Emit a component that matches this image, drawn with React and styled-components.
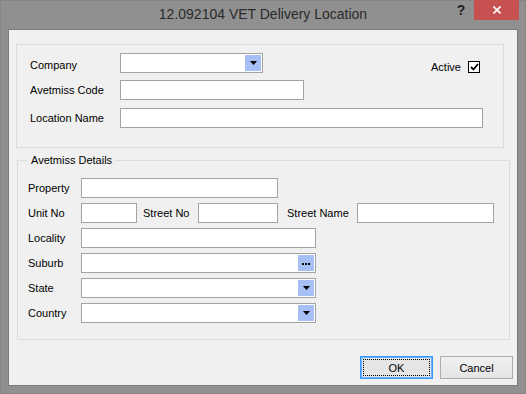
import React from 'react';
import styled, { createGlobalStyle } from 'styled-components';

const GlobalStyle = createGlobalStyle`
  html, body {
    margin: 0;
    padding: 0;
  }
  body {
    font-family: "Liberation Sans", Arial, sans-serif;
    background: #fff;
  }
`;

const Window = styled.div`
  width: 526px;
  height: 394px;
  box-sizing: border-box;
  background: #909090;
  box-shadow: inset 0 0 0 1px #858585;
  display: flex;
  flex-direction: column;
`;

const TitleBar = styled.div`
  height: 29px;
  flex-shrink: 0;
  display: grid;
  grid-template-columns: 1fr auto 1fr;
  align-items: start;
`;

const Title = styled.div`
  grid-column: 2;
  line-height: 29px;
  font-size: 14px;
  color: #2b2b2b;
  white-space: nowrap;
`;

const Controls = styled.div`
  grid-column: 3;
  justify-self: end;
  display: flex;
  margin-right: 7px;
`;

const HelpButton = styled.div`
  width: 26px;
  height: 20px;
  display: flex;
  align-items: center;
  justify-content: center;
  font-size: 14px;
  font-weight: bold;
  color: #222;
`;

const CloseButton = styled.div`
  width: 45px;
  height: 20px;
  background: #c75050;
  display: flex;
  align-items: center;
  justify-content: center;
`;

const Client = styled.div`
  flex: 1;
  margin: 0 8px 8px;
  background: #f0f0f0;
  border: 1px solid #7c7c7c;
  display: flex;
  flex-direction: column;
`;

const TopGroup = styled.div`
  margin: 14px 0 0 7px;
  width: 488px;
  height: 104px;
  box-sizing: border-box;
  border: 1px solid #dcdcdc;
  padding: 8px 23px 0 13px;
  display: flex;
  flex-direction: column;
  gap: 7px;
`;

const DetailsGroup = styled.fieldset`
  margin: 5px 0 0 8px;
  width: 493px;
  box-sizing: border-box;
  min-width: 0;
  border: 1px solid #dcdcdc;
  padding: 11px 0 16px 0;
`;

const Legend = styled.legend`
  margin-left: 9px;
  padding: 0 2px 0 4px;
  font-size: 11px;
  line-height: 14px;
  color: #000;
`;

const Stack = styled.div`
  padding-left: 10px;
  display: flex;
  flex-direction: column;
  gap: 5px;
`;

const Row = styled.div`
  display: flex;
  align-items: center;
  height: 20px;
  margin-top: ${p => p.$mt || 0}px;
`;

const Label = styled.span`
  width: ${p => p.$w}px;
  margin-left: ${p => p.$ml || 0}px;
  padding-top: ${p => p.$pt || 0}px;
  flex-shrink: 0;
  font-size: 11px;
  color: #000;
  white-space: nowrap;
`;

const TextBox = styled.div`
  width: ${p => p.$w}px;
  height: 20px;
  box-sizing: border-box;
  border: 1px solid #a3a3a3;
  background: #fff;
  flex-shrink: 0;
`;

const Combo = styled(TextBox)`
  display: flex;
  justify-content: flex-end;
  padding: 1px;
`;

const DropButton = styled.div`
  width: 16px;
  height: 100%;
  background: #a6c0f5;
  display: flex;
  align-items: center;
  justify-content: center;
`;

const Dots = styled.div`
  display: flex;
  gap: 1px;
  margin-top: 1px;
  span {
    width: 2px;
    height: 2px;
    background: #000;
  }
`;

const Active = styled.div`
  margin-left: auto;
  align-self: flex-start;
  margin-top: 8px;
  display: flex;
  align-items: center;
  gap: 7px;
  font-size: 11px;
  color: #000;
`;

const CheckBox = styled.div`
  width: 12px;
  height: 12px;
  box-sizing: border-box;
  border: 1px solid #000;
  background: #fff;
  display: flex;
  align-items: center;
  justify-content: center;
`;

const ButtonBar = styled.div`
  margin-top: 16px;
  padding-right: 4px;
  display: flex;
  justify-content: flex-end;
  gap: 7px;
`;

const Button = styled.div`
  width: 73px;
  height: 23px;
  box-sizing: border-box;
  display: flex;
  align-items: center;
  justify-content: center;
  font-size: 11px;
  color: #000;
  border: 1px solid ${p => (p.$default ? '#3399ff' : '#adadad')};
  background: ${p => (p.$default ? '#e5e5e5' : 'linear-gradient(#f0f0f0, #e5e5e5)')};
  box-shadow: ${p => (p.$default ? 'inset 0 0 0 1px #6cb4ff' : 'none')};
  outline: ${p => (p.$default ? '1px dotted #000' : 'none')};
  outline-offset: -4px;
`;

const Arrow = () => (
  <svg width="7" height="4" viewBox="0 0 7 4">
    <polygon points="0,0 7,0 3.5,4" fill="#000" />
  </svg>
);

const DropDown = ({ w }) => (
  <Combo $w={w}>
    <DropButton>
      <Arrow />
    </DropButton>
  </Combo>
);

const App = () => {
  return (
    <>
      <GlobalStyle />
      <Window>
        <TitleBar>
          <Title>12.092104 VET Delivery Location</Title>
          <Controls>
            <HelpButton>?</HelpButton>
            <CloseButton>
              <svg width="8" height="8" viewBox="0 0 8 8">
                <path d="M0.5 0.5 L7.5 7.5 M7.5 0.5 L0.5 7.5" stroke="#fff" strokeWidth="1.6" />
              </svg>
            </CloseButton>
          </Controls>
        </TitleBar>

        <Client>
          <TopGroup>
            <Row>
              <Label $w={90} $pt={4}>Company</Label>
              <DropDown w={143} />
              <Active>
                Active
                <CheckBox>
                  <svg width="9" height="8" viewBox="0 0 9 8">
                    <path d="M1 4 L3.5 6.5 L8 1" stroke="#000" strokeWidth="1.8" fill="none" />
                  </svg>
                </CheckBox>
              </Active>
            </Row>
            <Row>
              <Label $w={90}>Avetmiss Code</Label>
              <TextBox $w={184} />
            </Row>
            <Row $mt={1}>
              <Label $w={90}>Location Name</Label>
              <TextBox $w={363} />
            </Row>
          </TopGroup>

          <DetailsGroup>
            <Legend>Avetmiss Details</Legend>
            <Stack>
              <Row>
                <Label $w={53}>Property</Label>
                <TextBox $w={197} />
              </Row>
              <Row>
                <Label $w={53}>Unit No</Label>
                <TextBox $w={56} />
                <Label $w={55} $ml={6}>Street No</Label>
                <TextBox $w={80} />
                <Label $w={70} $ml={9}>Street Name</Label>
                <TextBox $w={137} />
              </Row>
              <Row>
                <Label $w={53}>Locality</Label>
                <TextBox $w={235} />
              </Row>
              <Row>
                <Label $w={53}>Suburb</Label>
                <Combo $w={235}>
                  <DropButton>
                    <Dots>
                      <span />
                      <span />
                      <span />
                    </Dots>
                  </DropButton>
                </Combo>
              </Row>
              <Row>
                <Label $w={53}>State</Label>
                <DropDown w={235} />
              </Row>
              <Row>
                <Label $w={53}>Country</Label>
                <DropDown w={235} />
              </Row>
            </Stack>
          </DetailsGroup>

          <ButtonBar>
            <Button $default>OK</Button>
            <Button>Cancel</Button>
          </ButtonBar>
        </Client>
      </Window>
    </>
  );
};

export default App;
